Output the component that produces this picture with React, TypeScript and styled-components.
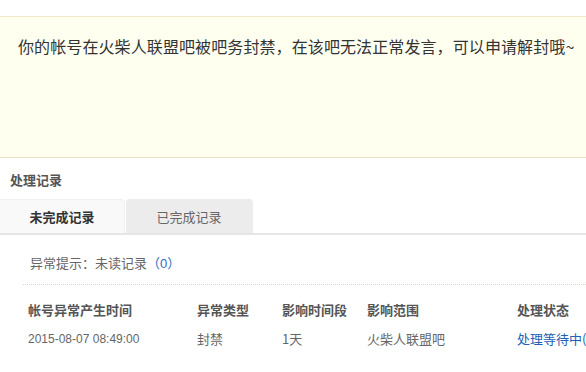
import styled, { createGlobalStyle } from "styled-components";

const GlobalStyle = createGlobalStyle`
  html, body {
    margin: 0;
    padding: 0;
    background: #fff;
    overflow: hidden;
  }
  body {
    font-family: "Noto Sans CJK SC", "Liberation Sans", sans-serif;
    color: #666;
  }
`;

interface RecordRow {
  time: string;
  type: string;
  duration: string;
  scope: string;
  status: string;
}

const records: RecordRow[] = [
  {
    time: "2015-08-07 08:49:00",
    type: "封禁",
    duration: "1天",
    scope: "火柴人联盟吧",
    status: "处理等待中(处理中)",
  },
];

const columns = ["帐号异常产生时间", "异常类型", "影响时间段", "影响范围", "处理状态"];

function App() {
  return (
    <Page>
      <GlobalStyle />
      <Notice>你的帐号在火柴人联盟吧被吧务封禁，在该吧无法正常发言，可以申请解封哦~</Notice>
      <SectionTitle>处理记录</SectionTitle>
      <Tabs>
        <Tab active>未完成记录</Tab>
        <Tab>已完成记录</Tab>
      </Tabs>
      <Panel>
        <Hint>
          异常提示：未读记录<Count>（<CountNum>0</CountNum>）</Count>
        </Hint>
        <Divider />
        <Table>
          {columns.map((c) => (
            <HeadCell key={c}>{c}</HeadCell>
          ))}
          {records.map((r) => (
            <>
              <Cell mono key={r.time}>{r.time}</Cell>
              <Cell>{r.type}</Cell>
              <Cell>{r.duration}</Cell>
              <Cell>{r.scope}</Cell>
              <StatusCell>{r.status}</StatusCell>
            </>
          ))}
        </Table>
      </Panel>
    </Page>
  );
}

const Page = styled.div`
  width: 640px;
  padding-top: 16px;
`;

const Notice = styled.div`
  height: 123px;
  padding: 17px 0 0 18px;
  background: #fffff0;
  border-top: 1px solid #f0e8c8;
  border-bottom: 1px solid #ebe3c8;
  font-size: 16px;
  line-height: 24px;
  letter-spacing: 0.1px;
  color: #333;
  white-space: nowrap;
`;

const SectionTitle = styled.div`
  margin: 12px 0 0 10px;
  font-size: 13px;
  line-height: 20px;
  font-weight: bold;
  color: #555;
`;

const Tabs = styled.div`
  display: flex;
  margin-top: 9px;
  border-bottom: 2px solid #e6e6e6;
`;

const Tab = styled.div<{ active?: boolean }>`
  width: ${({ active }) => (active ? "125px" : "127px")};
  height: 34px;
  margin-right: 1px;
  box-sizing: border-box;
  display: flex;
  align-items: center;
  justify-content: center;
  border-radius: ${({ active }) => (active ? "0 4px 0 0" : "4px 4px 0 0")};
  font-size: 13px;
  font-weight: ${({ active }) => (active ? "bold" : "normal")};
  color: ${({ active }) => (active ? "#333" : "#666")};
  background: ${({ active }) => (active ? "#f9f9f9" : "#ececec")};
  border: 1px solid ${({ active }) => (active ? "#f0f0f0" : "#ececec")};
  border-bottom: none;
  border-left: none;
`;

const Panel = styled.div`
  padding: 18px 0 0 23px;
`;

const Hint = styled.div`
  padding-left: 7px;
  font-size: 13px;
  line-height: 20px;
  color: #666;
`;

const Count = styled.span`
  color: #2e6bc2;
`;

const CountNum = styled.span`
  font-family: "Liberation Sans", sans-serif;
`;

const Divider = styled.div`
  margin-top: 10px;
  border-top: 1px dotted #dcd8c4;
`;

const Table = styled.div`
  display: grid;
  grid-template-columns: 169px 85px 85px 150px 1fr;
  padding: 15px 0 0 5px;
  row-gap: 9px;
`;

const HeadCell = styled.div`
  font-size: 13px;
  line-height: 20px;
  font-weight: bold;
  color: #555;
  white-space: nowrap;
`;

const Cell = styled.div<{ mono?: boolean }>`
  font-size: ${({ mono }) => (mono ? "12px" : "13px")};
  font-family: ${({ mono }) =>
    mono ? `"Liberation Sans", sans-serif` : `"Noto Sans CJK SC", sans-serif`};
  line-height: 20px;
  color: #666;
  white-space: nowrap;
`;

const StatusCell = styled(Cell)`
  color: #2161b5;
`;

export default App;
